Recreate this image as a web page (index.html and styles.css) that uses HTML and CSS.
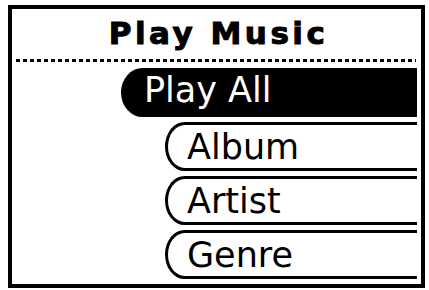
FILE: index.html
```html
<!DOCTYPE html>
<html>
<head>
<meta charset="utf-8">
<link rel="stylesheet" href="styles.css">
</head>
<body>
<div class="screen">
  <div class="title">Play Music</div>
  <div class="rule"></div>
  <div class="menu">
    <div class="item selected">Play All</div>
    <div class="item sub">Album</div>
    <div class="item sub">Artist</div>
    <div class="item sub">Genre</div>
  </div>
</div>
</body>
</html>
```
FILE: styles.css
```css
html, body {
  margin: 0;
  padding: 0;
  background: #fff;
}
body {
  width: 429px;
  height: 290px;
  overflow: hidden;
  font-family: "DejaVu Sans", sans-serif;
  color: #000;
}
.screen {
  box-sizing: border-box;
  margin: 5px 0 0 8px;
  width: 417px;
  height: 283px;
  border: 4px solid #000;
  display: flex;
  flex-direction: column;
}
.title {
  padding-top: 9px;
  padding-left: 4px;
  font-weight: bold;
  font-size: 31px;
  line-height: 30px;
  letter-spacing: 3.5px;
  text-align: center;
  -webkit-text-stroke: 1px #000;
}
.rule {
  margin: 11px 5px 0 4px;
  height: 3px;
  background: repeating-linear-gradient(90deg, #000 0 4px, transparent 4px 7px);
}
.menu {
  margin-top: 6px;
  padding-right: 4px;
  display: flex;
  flex-direction: column;
  gap: 5px;
}
.item {
  box-sizing: border-box;
  height: 49px;
  font-size: 35px;
  line-height: 44px;
  white-space: nowrap;
}
.selected {
  margin-left: 109px;
  padding-left: 23px;
  background: #000;
  color: #fff;
  border-radius: 22px 0 0 22px / 25px 0 0 25px;
}
.sub {
  margin-left: 153px;
  padding-left: 19px;
  border: 3px solid #000;
  border-right: none;
  border-radius: 20px 0 0 20px / 25px 0 0 25px;
}
```
